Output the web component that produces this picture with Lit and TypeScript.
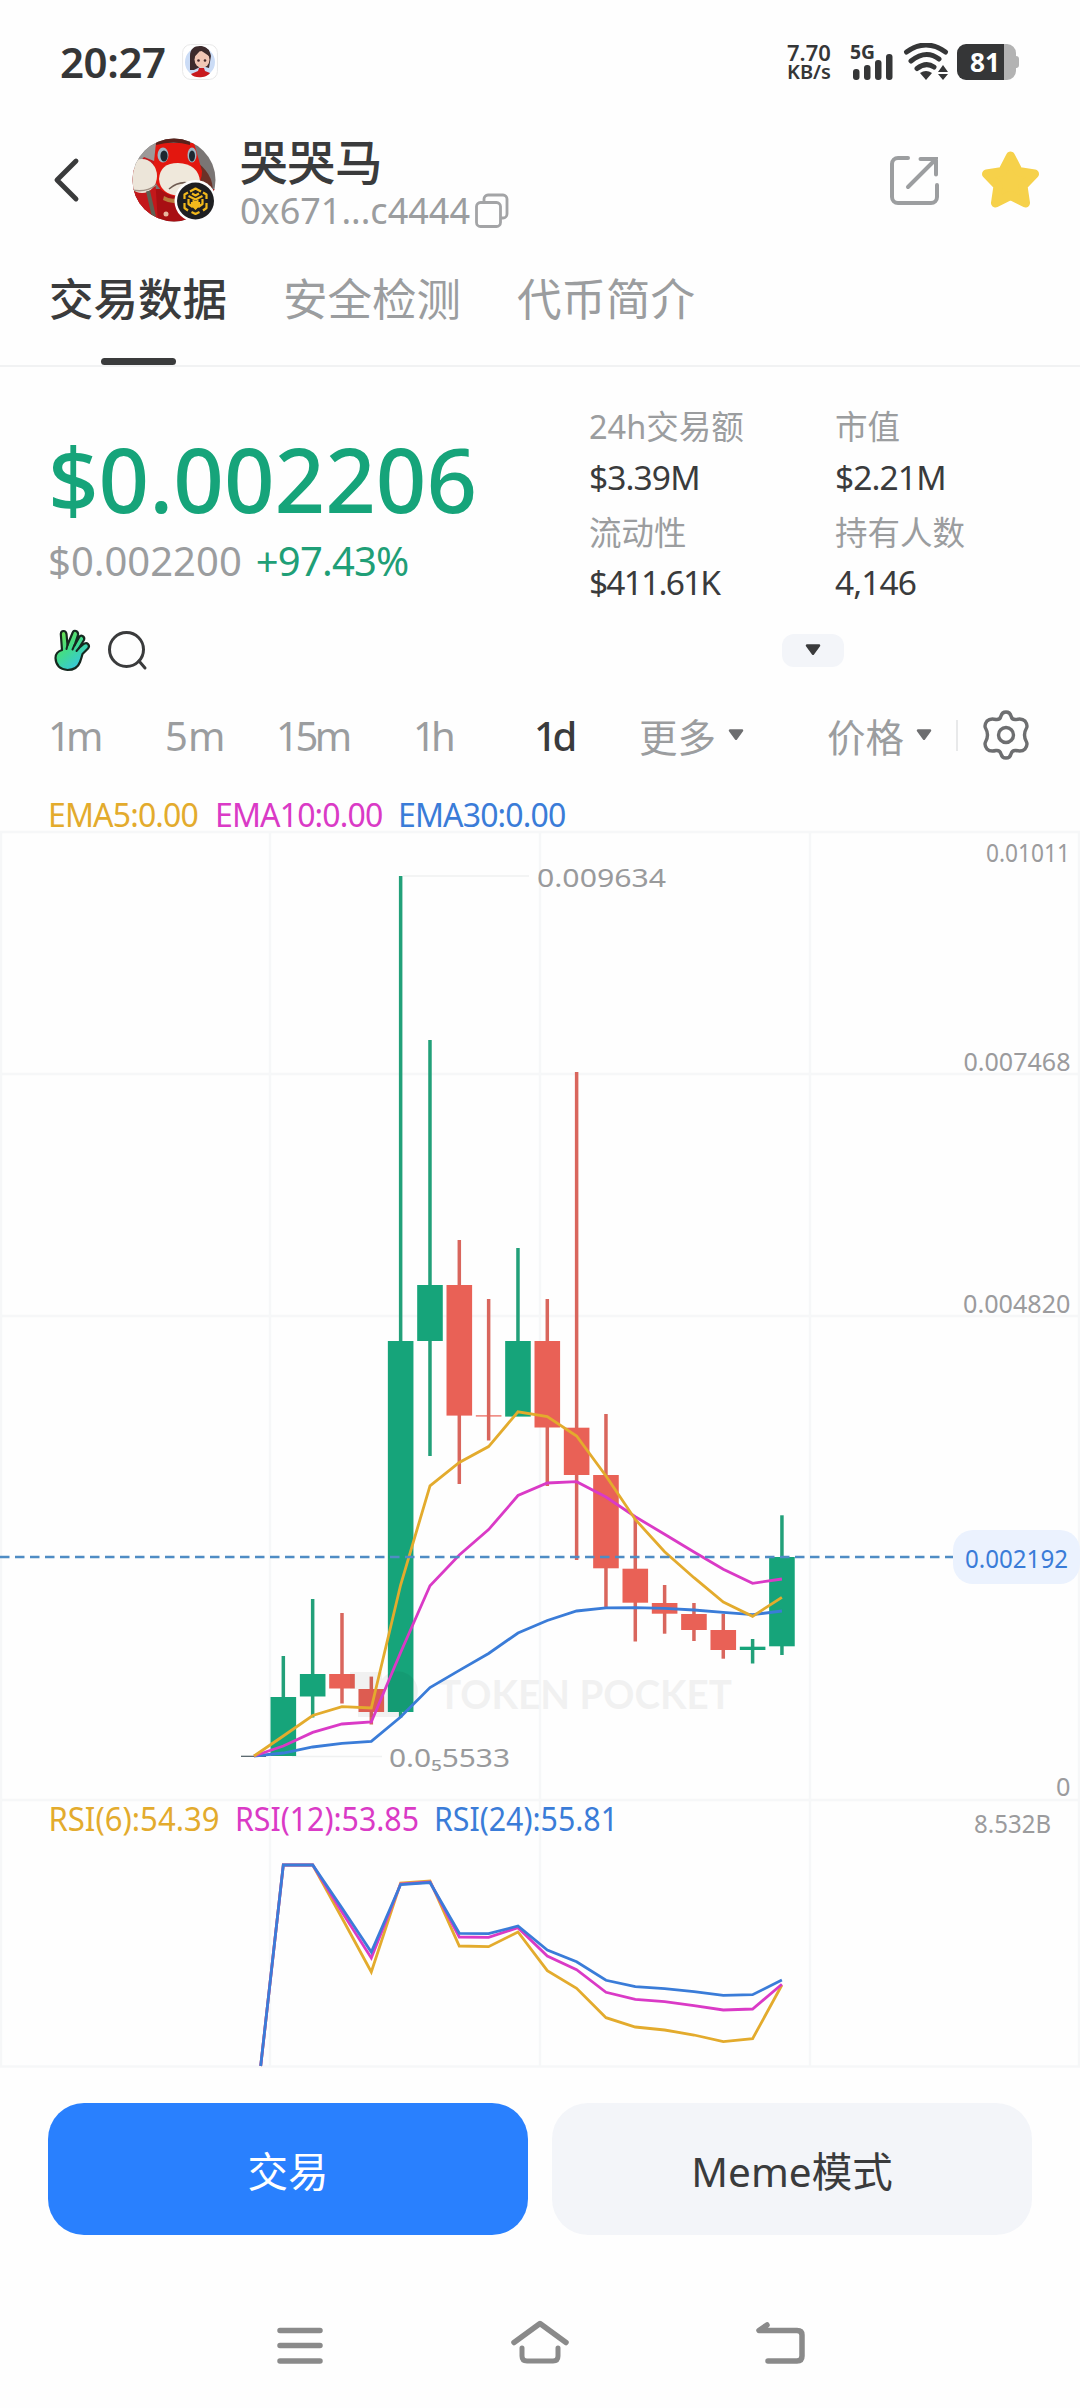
import { LitElement, html, svg, css } from "lit";
import { customElement } from "lit/decorators.js";
import { classMap } from "lit/directives/class-map.js";

const GREEN = "#16a47a";
const RED = "#e96156";
const GOLD = "#e3ab2d";
const PINK = "#da3ac6";
const BLUE = "#3a7cd8";

type Candle = { up: boolean; top: number; bottom: number; high: number; low: number };

const candles: Candle[] = [
  { up: true, top: 1696, bottom: 1755, high: 1655, low: 1755 },
  { up: true, top: 1673, bottom: 1695.5, high: 1598, low: 1716.5 },
  { up: false, top: 1673, bottom: 1687.5, high: 1612, low: 1702.5 },
  { up: false, top: 1688, bottom: 1711, high: 1675.6, low: 1723.5 },
  { up: true, top: 1340, bottom: 1711, high: 875, low: 1716.5 },
  { up: true, top: 1284, bottom: 1340, high: 1039, low: 1455 },
  { up: false, top: 1284, bottom: 1414.6, high: 1239, low: 1483 },
  { up: false, top: 1414.3, bottom: 1415.5, high: 1298, low: 1439.5 },
  { up: true, top: 1340, bottom: 1415.6, high: 1247, low: 1415 },
  { up: false, top: 1340, bottom: 1426.5, high: 1298, low: 1485 },
  { up: false, top: 1426.7, bottom: 1474, high: 1071, low: 1559 },
  { up: false, top: 1474, bottom: 1567.3, high: 1413, low: 1606.7 },
  { up: false, top: 1567.7, bottom: 1601.7, high: 1518, low: 1640.5 },
  { up: false, top: 1602, bottom: 1612.7, high: 1584, low: 1632.7 },
  { up: false, top: 1613, bottom: 1629, high: 1602, low: 1640 },
  { up: false, top: 1629, bottom: 1649, high: 1612.7, low: 1657.7 },
  { up: true, top: 1645.7, bottom: 1649, high: 1638, low: 1662.5 },
  { up: true, top: 1556, bottom: 1645.3, high: 1514.3, low: 1654 },
];

const STEP = 29.33;
const slot = (i: number) => 254 + i * STEP;
const line = (ys: number[], start = 0) =>
  ys.map((y, i) => `${slot(i + start).toFixed(1)},${y}`).join(" ");

const ema = [
  { color: BLUE, ys: [1755, 1752, 1746, 1742.4, 1740.3, 1716, 1686.6, 1669.4, 1652.5, 1632, 1619.5, 1610, 1606.9, 1606.7, 1607.3, 1609, 1611.3, 1613.7, 1610] },
  { color: PINK, ys: [1755, 1745, 1731.4, 1723, 1721, 1651.5, 1584.7, 1554, 1528.6, 1494.5, 1482, 1480.7, 1496, 1515.7, 1533.3, 1551, 1568.3, 1582.3, 1578] },
  { color: GOLD, ys: [1755, 1735, 1714.5, 1705.6, 1707, 1584, 1484.8, 1461.4, 1445.6, 1410.8, 1415.6, 1435, 1475, 1518.5, 1550.7, 1576.7, 1601, 1615.3, 1596.3] },
];

const rsi = [
  { color: GOLD, ys: [1864, 1864, 1917, 1971, 1882, 1880, 1945, 1945.7, 1931, 1969.7, 1987.3, 2016.7, 2026, 2029, 2034, 2040.7, 2037.7, 1984] },
  { color: PINK, ys: [1864, 1864, 1911, 1957, 1883, 1881, 1936, 1936.3, 1926.7, 1955, 1968.7, 1991.3, 1998.3, 2000.7, 2004.7, 2009, 2008, 1983.3] },
  { color: BLUE, ys: [1864, 1864, 1907, 1951, 1883.5, 1881.5, 1932.3, 1932.7, 1925, 1949, 1960.7, 1979.3, 1985.7, 1987.7, 1990.7, 1994.3, 1993.7, 1979] },
];

@customElement("kline-chart")
export class KlineChart extends LitElement {
  static styles = css`
    :host { display: block; height: 1238px; }
    svg { display: block; font-family: "Noto Sans", "Noto Sans CJK SC", sans-serif; }
    .axis { font-size: 25.5px; fill: #9b9b9d; }
    .mark { font-size: 25.5px; fill: #999a9c; }
    .now { font-size: 26px; fill: #3a7cd8; }
    .water { font-size: 40px; font-weight: 700; font-family: Lato, sans-serif; }
    .legend { font-size: 32px; }
  `;

  private label(cls: string, text: string, x: number, w: number, y: number) {
    return svg`<text class=${cls} x=${x} y=${y} textLength=${w} lengthAdjust="spacingAndGlyphs">${text}</text>`;
  }

  render() {
    return html`
      <svg width="1080" height="1238" viewBox="0 829 1080 1238">
        <g stroke="#f6f7f8" stroke-width="2.4" fill="none">
          ${[831, 1073, 1315, 1799, 2065.5].map((y) => svg`<path d="M0 ${y}H1080"/>`)}
          ${[1, 270, 540, 810, 1079].map((x) => svg`<path d="M${x} 831V2065"/>`)}
        </g>
        <path d="M403 875H529M292 1755.5H382" stroke="#f0f1f1" stroke-width="1.5"/>
        <path d="M241 1755.3H266" stroke="#4a5a60" stroke-width="1.2"/>
        ${candles.map((c, i) => {
          const x = slot(i + 1);
          const body = c.up ? GREEN : RED;
          return svg`
            <rect x=${x - 1.75} y=${c.high} width="3.5" height=${c.low - c.high} fill=${c.up ? "#22a079" : "#d9665d"}/>
            <rect x=${x - 12.8} y=${c.top} width="25.6" height=${c.bottom - c.top} fill=${body}/>`;
        })}
        <g fill="#000" opacity="0.048">
          <path d="M350 1671H382V1678A20 20 0 1 1 392 1709.500L400 1711V1716H358V1688H350Z"/>
          <text class="water" x="438" y="1708" textLength="294" lengthAdjust="spacingAndGlyphs">TOKEN POCKET</text>
        </g>
        ${ema.map((s) => svg`<polyline points=${line(s.ys)} fill="none" stroke=${s.color} stroke-width="2.8"/>`)}
        <path d="M0 1556H953" stroke="#4e8cc4" stroke-width="2.300" stroke-dasharray="9.500 5.500"/>
        <rect x="953" y="1529" width="127" height="54" rx="20" fill="#ebf2fe"/>
        ${this.label("now", "0.002192", 965, 103, 1566.5)}
        ${this.label("axis", "0.01011", 986, 84, 861)}
        ${this.label("axis", "0.007468", 963.5, 107, 1069.5)}
        ${this.label("axis", "0.004820", 963, 107.5, 1312)}
        ${this.label("axis", "0", 1056, 14.5, 1795)}
        ${this.label("axis", "8.532B", 974, 77, 1831.5)}
        ${this.label("mark", "0.009634", 537, 129, 886)}
        ${this.label("mark", "0.0₅5533", 389, 121, 1766)}
        ${rsi.map((s) => svg`<polyline points=${"260.7,2065 " + line(s.ys, 1)} fill="none" stroke=${s.color} stroke-width="2.8"/>`)}
        <g>
          <g fill=${GOLD}>${this.label("legend", "RSI(6):54.39", 48.5, 171, 1830)}</g>
          <g fill=${PINK}>${this.label("legend", "RSI(12):53.85", 235, 184, 1830)}</g>
          <g fill=${BLUE}>${this.label("legend", "RSI(24):55.81", 434, 184, 1830)}</g>
        </g>
      </svg>
    `;
  }
}

@customElement("app-root")
export class AppRoot extends LitElement {
  static styles = css`
    :host {
      display: block;
      width: 1080px;
      height: 2408px;
      background: #fefefe;
      color: #3a3b3c;
      font-family: "Noto Sans", "Noto Sans CJK SC", sans-serif;
      white-space: nowrap;
      overflow: hidden;
    }
    * { box-sizing: border-box; }
    svg { display: block; flex: none; }
    .status { height: 122px; padding: 2px 60px 0 60px; display: flex; align-items: center; }
    .clock { width: 122px; font-size: 42px; line-height: 50px; font-weight: 600; letter-spacing: -0.4px; color: #353637; }
    .spacer { flex: 1; }
    .speed { width: 62px; font-size: 22px; line-height: 20px; font-weight: 600; color: #353637; }
    .unit { display: block; font-size: 20px; }
    .header { height: 116px; display: flex; align-items: center; padding-left: 50px; }
    .portrait { margin-left: 50px; }
    .ident { margin-left: 22px; width: 600px; padding-top: 5px; }
    .name { font-size: 47.5px; line-height: 54px; font-weight: 500; margin-top: 2px; }
    .addr { display: flex; align-items: center; gap: 5px; font-size: 36px; line-height: 44px; color: #9b9d9f; }
    .share { margin-left: 49px; }
    .star { margin-left: 42px; }
    .tabs { height: 129px; border-bottom: 2px solid #f1f2f3; display: flex; gap: 56px; padding: 0 49px; }
    .tab { width: 178px; font-size: 44.5px; line-height: 122px; color: #9b9d9f; display: flex; flex-direction: column; align-items: center; }
    .on { color: #3a3b3c; font-weight: 500; }
    .bar { width: 75px; height: 8px; border-radius: 4px; background: #3a3b3c; margin-top: -2px; }
    .summary { height: 243px; display: flex; padding: 33px 0 0 48px; }
    .quote { width: 541px; }
    .price { font-size: 88.500px; font-weight: 500; line-height: 100px; margin-top: 29px; color: #16a47a; }
    .sub { display: flex; gap: 14px; font-size: 40px; line-height: 54px; margin-top: 5px; color: #9b9d9f; }
    .up { color: #1f9f77; letter-spacing: -0.8px; }
    .stats { display: grid; grid-template-columns: 246px 220px; grid-template-rows: 54px 46px 66px 32px; align-content: start; align-items: center; }
    .k { font-size: 32.5px; line-height: 32px; color: #9b9d9f; }
    .v { font-size: 33.5px; line-height: 32px; letter-spacing: -0.9px; }
    .tight { letter-spacing: -1.8px; }
    .tools { height: 80px; display: flex; align-items: center; padding-left: 52px; gap: 16px; }
    .pill { margin-left: 618px; width: 62px; height: 33px; border-radius: 12px; background: #f3f5f9; display: flex; align-items: center; justify-content: center; }
    .periods { height: 90px; display: flex; align-items: center; font-size: 40px; color: #9b9d9f; padding-left: 48px; }
    .p1 { width: 117px; letter-spacing: -5px; } .p2 { width: 111px; } .p3 { width: 137px; letter-spacing: -3.500px; }
    .p4 { width: 121px; letter-spacing: -5px; } .p5 { width: 105px; letter-spacing: -4.500px; }
    .drop { display: flex; align-items: center; gap: 12px; font-size: 38.500px; }
    .more { width: 188px; }
    .cost { width: 129px; }
    .rule { width: 2px; height: 31px; background: #e8e9ea; margin-right: 23px; }
    .legend { height: 50px; display: flex; font-size: 32px; line-height: 30px; padding: 20px 0 0 48px; letter-spacing: -0.85px; }
    .e1 { width: 167px; color: #e3ab2d; } .e2 { width: 183px; color: #da3ac6; } .e3 { color: #3a7cd8; }
    .actions { display: flex; gap: 24px; padding: 35px 48px 0; }
    .btn { width: 480px; height: 132px; border-radius: 36px; background: #f3f5f9; display: flex; align-items: center; justify-content: center; font-size: 40.500px; }
    .primary { background: #2980fe; color: #fff; }
    .nav { height: 60px; margin-top: 78px; padding: 0 274px; display: flex; justify-content: space-between; }
  `;

  private caret(color: string) {
    return html`<svg width="16" height="12" viewBox="0 0 16 12"><path d="M2 1.500H14L8 9.800Z" fill=${color} stroke=${color} stroke-width="2.500" stroke-linejoin="round"/></svg>`;
  }

  private statusIcons() {
    return svg`
      <g fill="#353637">
        <rect x="4" y="26" width="6.500" height="11" rx="3"/><rect x="15" y="22" width="6.500" height="15" rx="3"/>
        <rect x="26" y="17" width="6.500" height="20" rx="3"/><rect x="37" y="11" width="6.500" height="26" rx="3"/>
        <text x="1" y="16" font-size="19" font-weight="700" textLength="25" lengthAdjust="spacingAndGlyphs">5G</text>
        <path d="M71 30Q77 26 83 30L77 37Z"/>
        <path d="M94 22L99 29H89ZM94 37L99 31H89Z"/>
      </g>
      <g fill="none" stroke="#353637" stroke-width="5" stroke-linecap="round">
        <path d="M57.500 9Q77 -5 96.500 9M62 18Q77 6 90 16M68 25.500Q77 18.500 85 24"/>
      </g>
      <path d="M152 1h6a9 9 0 0 1 9 9v3a3 3 0 0 1 3 3v6a3 3 0 0 1-3 3v3a9 9 0 0 1-9 9h-6Z" fill="#b3b3b3"/>
      <path d="M155 1v36H117a9 9 0 0 1-9-9V10a9 9 0 0 1 9-9Z" fill="#353637"/>
      <text x="121" y="29" font-size="27" font-weight="700" fill="#fff" textLength="30" lengthAdjust="spacingAndGlyphs">81</text>`;
  }

  render() {
    return html`
      <div class="status">
        <span class="clock">20:27</span>
        <svg width="36" height="36" viewBox="0 0 36 36">
          <rect x=".6" y=".6" width="34.800" height="34.800" rx="8" fill="#fff" stroke="#e8e8e8"/>
          <circle cx="18" cy="18" r="15" fill="#cbdcf6"/>
          <path d="M8 26V12C8 5 12 2 18 2s10 4 11 10l-2 12-7-2-8 4Z" fill="#3d2b2c"/>
          <ellipse cx="20" cy="15.500" rx="7.500" ry="8.500" fill="#f1c7b5"/>
          <path d="M10 14C13 12 17 9 18 6c3 2 7 4 10 7l-1-7-8-4-8 4Z" fill="#3d2b2c"/>
          <circle cx="16.500" cy="16.500" r="1.300" fill="#43282a"/><circle cx="23" cy="16.500" r="1.300" fill="#43282a"/>
          <path d="M17 24h5l1 3 5 2c-3 5-16 6-19 1l7-3Z" fill="#c81a1f"/>
        </svg>
        <span class="spacer"></span>
        <span class="speed">7.70<span class="unit">KB/s</span></span>
        <svg width="171" height="38" viewBox="0 0 171 38">${this.statusIcons()}</svg>
      </div>

      <div class="header">
        <svg width="32" height="50" viewBox="0 0 32 50"><path d="M26 6L7 25L26 44" fill="none" stroke="#3a3b3c" stroke-width="4.900" stroke-linecap="round" stroke-linejoin="round"/></svg>
        <svg class="portrait" width="86" height="86" viewBox="0 0 86 86">
          <defs><clipPath id="face"><circle cx="42" cy="43" r="41.500"/></clipPath></defs>
          <g clip-path="url(#face)">
            <rect width="86" height="86" fill="#7a7574"/>
            <path d="M0 0H24V30H0Z" fill="#9c9a99"/>
            <path d="M0 52H86V86H0Z" fill="#a80f13"/>
            <path d="M0 34L12 20L22 24L26 86H0Z" fill="#c3181b"/>
            <path d="M66 26Q84 40 80 60L66 54Z" fill="#6b3127"/>
            <path d="M24 6H62L70 34Q70 54 46 60Q22 56 21 34Z" fill="#e3170f"/>
            <path d="M24 4Q42 -4 58 4V8Q42 3 24 8Z" fill="#5a211b"/>
            <ellipse cx="10" cy="39" rx="15" ry="17" fill="#ece5d9"/>
            <path d="M0 53Q14 56 24 48" stroke="#a08f83" stroke-width="1.600" fill="none"/>
            <path d="M27 42Q28 26 46 26Q66 27 68 44Q66 58 47 59Q28 57 27 42Z" fill="#efe8db"/>
            <path d="M37 52Q46 44 57 46" stroke="#6f5c52" stroke-width="1.600" fill="none"/>
            <ellipse cx="31" cy="18" rx="5.500" ry="7.500" fill="#9fb6c4"/><ellipse cx="32" cy="19" rx="3.600" ry="5.500" fill="#1c2730"/>
            <ellipse cx="60" cy="18" rx="4.500" ry="7.500" fill="#9fb6c4"/><ellipse cx="60" cy="19" rx="3" ry="5.500" fill="#1c2730"/>
            <path d="M16 54L22 80" stroke="#5e6052" stroke-width="4"/><circle cx="34" cy="77" r="2.500" fill="#e8b7a0"/>
            <path d="M32 59Q40 64 48 60L46 66Q38 67 31 63Z" fill="#b97a3b"/>
          </g>
          <circle cx="63.500" cy="64" r="21" fill="#fefefe"/>
          <circle cx="63.500" cy="64" r="18.500" fill="#1e1f22"/>
          <g fill="none" stroke="#f2b91c" stroke-width="2.200" stroke-linejoin="round">
            <path d="M58 54.500L63.500 51.500L69 54.500M71 55.500L74.500 57.500V62M74.500 66V71L71 73.500M67.500 75L63.500 77L59.500 75M56 73.500L52.500 71V66M52.500 62V57.500L56 55.500"/>
            <path d="M56.500 59L63.500 62.500L70.500 59M56.500 62V67L60 69.500V65M70.500 62V67L67 69.500V65M60 56.500L63.500 58.500L67 56.500"/>
          </g>
          <path d="M60.500 62.500L63.500 64L66.500 62.500V70L63.500 73L60.500 70Z" fill="#f2b91c"/>
        </svg>
        <div class="ident">
          <div class="name">哭哭马</div>
          <div class="addr">0x671...c4444
            <svg width="34" height="36" viewBox="0 0 34 36" fill="none" stroke="#a3a4a6" stroke-width="2.800">
              <rect x="1.500" y="9.500" width="24" height="24" rx="4"/><path d="M9 9V6a4 4 0 0 1 4-4H28a4 4 0 0 1 4 4V21a4 4 0 0 1-4 4H26"/>
            </svg>
          </div>
        </div>
        <svg class="share" width="50" height="50" viewBox="0 0 50 50" fill="none" stroke="#9c9ea0" stroke-width="4" stroke-linecap="round">
          <path d="M19 3H9a6 6 0 0 0-6 6V42a6 6 0 0 0 6 6H42a6 6 0 0 0 6-6V30"/><path d="M31.500 4H47V19.500M47 4L19 32"/>
        </svg>
        <svg class="star" width="60" height="60" viewBox="0 0 60 60">
          <path d="M29.500 6L37.500 21.500L53.500 24L42 36L44.500 53L29.500 45.500L14.500 53L17 36L5.500 24L21.500 21.500Z" fill="#f6d14a" stroke="#f6d14a" stroke-width="9" stroke-linejoin="round"/>
        </svg>
      </div>

      <div class="tabs">
        <div class=${classMap({ tab: true, on: true })}>交易数据<div class="bar"></div></div>
        <div class="tab">安全检测</div>
        <div class="tab">代币简介</div>
      </div>

      <div class="summary">
        <div class="quote">
          <div class="price">$0.002206</div>
          <div class="sub"><span>$0.002200</span><span class="up">+97.43%</span></div>
        </div>
        <div class="stats">
          <span class="k">24h交易额</span><span class="k">市值</span>
          <span class="v">$3.39M</span><span class="v">$2.21M</span>
          <span class="k">流动性</span><span class="k">持有人数</span>
          <span class="v tight">$411.61K</span><span class="v">4,146</span>
        </div>
      </div>

      <div class="tools">
        <svg width="40" height="44" viewBox="0 0 40 44">
          <defs><linearGradient id="hand" x1="0" y1="0" x2="0.700" y2="1"><stop offset="0.100" stop-color="#6be04f"/><stop offset="0.500" stop-color="#42dc8b"/><stop offset="1" stop-color="#35c4ea"/></linearGradient></defs>
          <path d="M10 22L8.800 6Q9 3 11.500 3Q14 3 14.500 6L15.500 17L20.500 5Q21.500 2 24 3Q26.500 4 26 7L22.500 17.500L27 9.500Q28.500 7 30.500 8Q33 9.500 32 12L27 20L31 16.500Q34 14 36 16Q38 18 36 20.500L30.500 26Q29.500 30 28 34Q25 42 15.500 42Q4 41 3.500 30Q3.500 24 10 22Z" fill="url(#hand)" stroke="#16281f" stroke-width="2.200" stroke-linejoin="round"/>
          <path d="M15.500 17L14.500 21M22.500 17L20.500 21.500M27 20L24.500 23" stroke="#16281f" stroke-width="2" stroke-linecap="round"/>
        </svg>
        <svg width="40" height="42" viewBox="0 0 40 42" fill="none" stroke="#3a3b3c" stroke-width="3" stroke-linecap="round"><circle cx="18.500" cy="20.500" r="17"/><path d="M31 32L37 39"/></svg>
        <div class="pill">${this.caret("#3a3b3c")}</div>
      </div>

      <div class="periods">
        <span class="p1">1m</span><span class="p2">5m</span><span class="p3">15m</span><span class="p4">1h</span><span class="p5 on">1d</span>
        <span class="drop more">更多${this.caret("#6d6e70")}</span>
        <span class="drop cost">价格${this.caret("#6d6e70")}</span>
        <span class="rule"></span>
        <svg width="50" height="52" viewBox="0 0 50 52" fill="none" stroke="#6d6e70" stroke-width="3.400" stroke-linejoin="round">
          <path d="M20 7Q21 3 25 3Q29 3 30 7Q31 11 35 10.500Q41 9 44 12Q47 16 45.500 19Q41.500 26 45.500 33Q47 36 44 40Q41 43 35 41.500Q31 41 30 45Q29 49 25 49Q21 49 20 45Q19 41 15 41.500Q9 43 6 40Q3 36 4.500 33Q8.500 26 4.500 19Q3 16 6 12Q9 9 15 10.500Q19 11 20 7Z"/>
          <circle cx="25" cy="26" r="7.500"/>
        </svg>
      </div>

      <div class="legend"><span class="e1">EMA5:0.00</span><span class="e2">EMA10:0.00</span><span class="e3">EMA30:0.00</span></div>
      <kline-chart></kline-chart>

      <div class="actions">
        <div class="btn primary">交易</div>
        <div class="btn">Meme模式</div>
      </div>

      <div class="nav">
        <svg width="52" height="60" viewBox="0 0 52 60" stroke="#8a8a8a" stroke-width="5.500" stroke-linecap="round"><path d="M6 17.500H46M6 32.500H46M6 48H46"/></svg>
        <svg width="64" height="60" viewBox="0 0 64 60" fill="none" stroke="#8a8a8a" stroke-width="5.500" stroke-linecap="round" stroke-linejoin="round"><path d="M6 29.500L32 10.500L58 29.500"/><path d="M14 35V43Q14 48 19 48H45Q50 48 50 43V35" stroke-width="5"/></svg>
        <svg width="52" height="60" viewBox="0 0 52 60" fill="none" stroke="#8a8a8a" stroke-width="5.500" stroke-linecap="round" stroke-linejoin="round"><path d="M13 12L5 17.500H43Q48 17.500 48 22V43Q48 48 43 48H14"/></svg>
      </div>
    `;
  }
}
